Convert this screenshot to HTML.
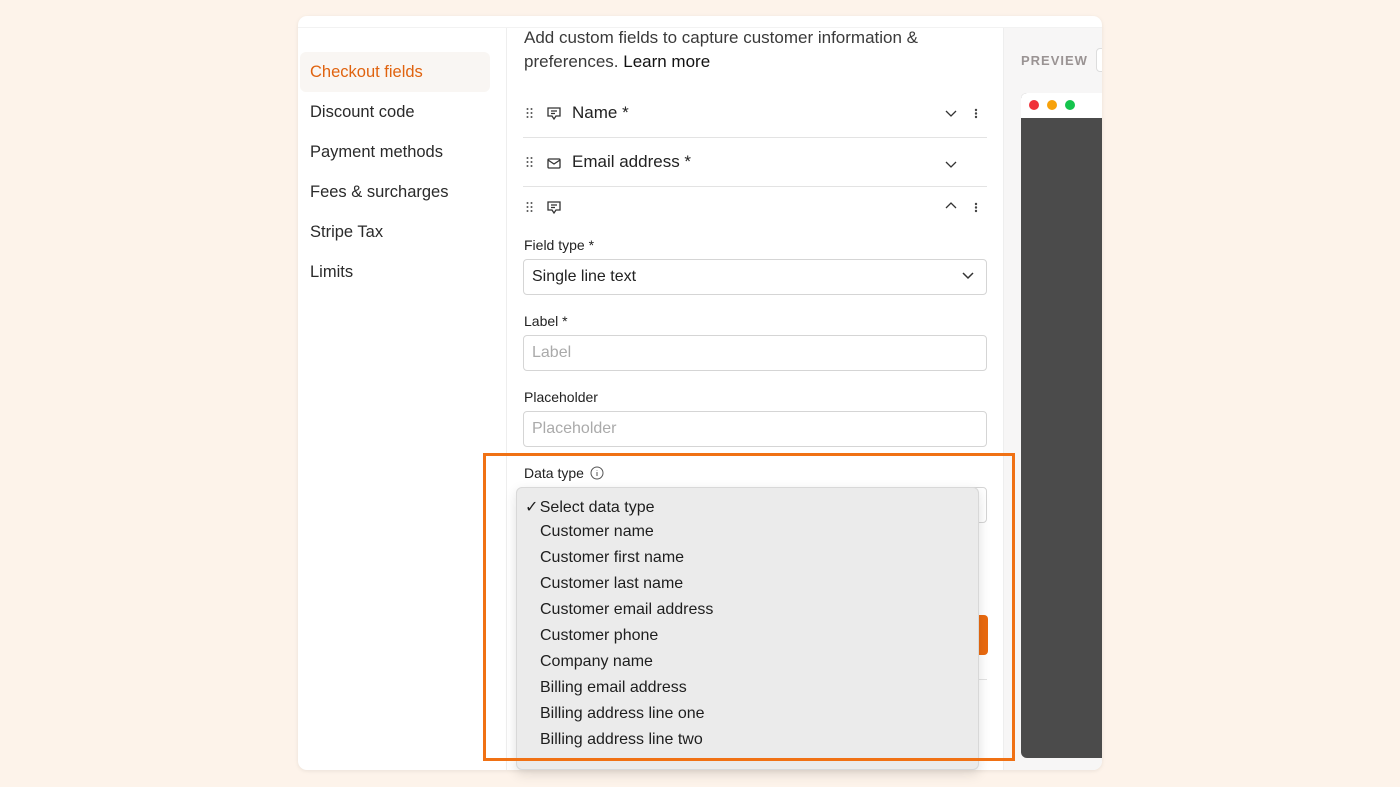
<!DOCTYPE html>
<html><head><meta charset="utf-8"><style>
*{box-sizing:border-box;margin:0;padding:0}
body{width:1400px;height:787px;background:#fdf3ea;font-family:"Liberation Sans",sans-serif;position:relative;overflow:hidden;color:#222}
.card{position:absolute;left:298px;top:16px;width:804px;height:754px;background:#fff;border-radius:9px;box-shadow:0 1px 4px rgba(0,0,0,.08);overflow:hidden}
.topline{position:absolute;left:0;top:11px;width:100%;height:1px;background:#f2f2f2}
.side{position:absolute;left:0;top:12px;width:209px;bottom:0;border-right:1px solid #eee}
.nav{position:absolute;left:12px;font-size:16.5px;color:#2a2a2a}
.nav.act{left:2px;width:190px;height:40px;background:#f9f6f3;border-radius:6px;color:#e0630f;padding:11px 10px}
.abs{position:absolute}
.row{position:absolute;left:225px;width:464px;height:1px;background:#e3e3e3}
.lbl{position:absolute;left:226px;font-size:14px;color:#222}
.inp{position:absolute;left:225px;width:464px;height:36px;border:1px solid #d5d5d5;border-radius:4px;font-size:16px;color:#aaa;padding:8px 8px}
.prev{position:absolute;left:705px;top:12px;width:99px;bottom:0;background:#f7f6f6;border-left:1px solid #eee}
.dd{position:absolute;left:516px;top:487px;width:463px;height:283px;background:#ebebeb;border:1px solid #d8d8d8;border-radius:6px;box-shadow:0 4px 12px rgba(0,0,0,.12)}
.dd div{position:absolute;left:23px;font-size:16px;color:#1e1e1e}
.orange{position:absolute;left:483px;top:453px;width:532px;height:308px;border:3px solid #f07114}
</style></head><body>
<div class="card">
<div class="topline"></div>
<div class="side">
<div class="nav act" style="top:24px">Checkout fields</div>
<div class="nav" style="top:75px">Discount code</div>
<div class="nav" style="top:115px">Payment methods</div>
<div class="nav" style="top:155px">Fees &amp; surcharges</div>
<div class="nav" style="top:195px">Stripe Tax</div>
<div class="nav" style="top:235px">Limits</div>
</div>
<div class="abs" style="left:226px;top:10px;font-size:17px;line-height:24px;color:#3a3a3a;width:420px">Add custom fields to capture customer information &amp; preferences. <span style="color:#111">Learn more</span></div>
<svg class="abs" style="left:228px;top:90px" width="460" height="110" fill="none" stroke="#333" stroke-width="1.3">
<g fill="#555" stroke="none"><circle cx="1.5" cy="3" r="1"/><circle cx="5.5" cy="3" r="1"/><circle cx="1.5" cy="7" r="1"/><circle cx="5.5" cy="7" r="1"/><circle cx="1.5" cy="11" r="1"/><circle cx="5.5" cy="11" r="1"/></g>
<g fill="#555" stroke="none" transform="translate(0,49)"><circle cx="1.5" cy="3" r="1"/><circle cx="5.5" cy="3" r="1"/><circle cx="1.5" cy="7" r="1"/><circle cx="5.5" cy="7" r="1"/><circle cx="1.5" cy="11" r="1"/><circle cx="5.5" cy="11" r="1"/></g>
<g fill="#555" stroke="none" transform="translate(0,94)"><circle cx="1.5" cy="3" r="1"/><circle cx="5.5" cy="3" r="1"/><circle cx="1.5" cy="7" r="1"/><circle cx="5.5" cy="7" r="1"/><circle cx="1.5" cy="11" r="1"/><circle cx="5.5" cy="11" r="1"/></g>
<path d="M22 2h12v8h-4l-2 3-2-3h-4z M25 5h6 M25 7.5h4"/>
<path d="M22 96h12v8h-4l-2 3-2-3h-4z M25 99h6 M25 101.5h4"/>
<rect x="22" y="53" width="12" height="9" rx="1"/><path d="M22 54l6 4 6-4"/>
<path d="M420 5l5 5 5-5 M420 56l5 5 5-5 M420 102l5-5 5 5"/>
<g fill="#444" stroke="none"><circle cx="450" cy="4" r="1.2"/><circle cx="450" cy="7.5" r="1.2"/><circle cx="450" cy="11" r="1.2"/><circle cx="450" cy="98" r="1.2"/><circle cx="450" cy="101.5" r="1.2"/><circle cx="450" cy="105" r="1.2"/></g>
</svg>
<div class="abs" style="left:274px;top:87px;font-size:17px;color:#222">Name *</div>
<div class="abs" style="left:274px;top:136px;font-size:17px;color:#222">Email address *</div>
<div class="row" style="top:121px"></div>
<div class="row" style="top:170px"></div>
<div class="lbl" style="top:221px">Field type *</div>
<div class="inp" style="top:243px;color:#222">Single line text<svg style="position:absolute;right:12px;top:12px" width="12" height="8" fill="none" stroke="#333" stroke-width="1.5"><path d="M1 1l5 5 5-5"/></svg></div>
<div class="lbl" style="top:297px">Label *</div>
<div class="inp" style="top:319px">Label</div>
<div class="lbl" style="top:373px">Placeholder</div>
<div class="inp" style="top:395px">Placeholder</div>
<div class="lbl" style="top:449px">Data type <svg style="vertical-align:-2px;margin-left:2px" width="14" height="14" fill="none" stroke="#555"><circle cx="7" cy="7" r="6"/><path d="M7 6v4M7 4v.5"/></svg></div>
<div class="inp" style="top:471px"></div>
<div class="abs" style="left:640px;top:599px;width:50px;height:40px;background:#ea6a0f;border-radius:4px"></div>
<div class="row" style="top:663px"></div>
<div class="prev">
<div class="abs" style="left:17px;top:25px;font-size:13px;font-weight:bold;letter-spacing:1px;color:#9a9393">PREVIEW</div>
<div class="abs" style="left:92px;top:20px;width:20px;height:24px;border:1px solid #ddd;border-radius:4px;background:#fff"></div>
<div class="abs" style="left:17px;top:65px;width:90px;height:665px;background:#4b4b4b;border-radius:6px 0 0 6px;overflow:hidden">
<div style="height:25px;background:#fff;position:relative">
<span style="position:absolute;left:8px;top:7px;width:10px;height:10px;border-radius:50%;background:#f0313a"></span>
<span style="position:absolute;left:26px;top:7px;width:10px;height:10px;border-radius:50%;background:#f7a10a"></span>
<span style="position:absolute;left:44px;top:7px;width:10px;height:10px;border-radius:50%;background:#14c44d"></span>
</div></div>
</div>
</div>
<div class="dd">
<div style="left:8px;top:9px">✓&#8202;Select data type</div>
<div style="top:35px">Customer name</div>
<div style="top:61px">Customer first name</div>
<div style="top:87px">Customer last name</div>
<div style="top:113px">Customer email address</div>
<div style="top:139px">Customer phone</div>
<div style="top:165px">Company name</div>
<div style="top:191px">Billing email address</div>
<div style="top:217px">Billing address line one</div>
<div style="top:243px">Billing address line two</div>
</div>
<div class="orange"></div>
</body></html>
